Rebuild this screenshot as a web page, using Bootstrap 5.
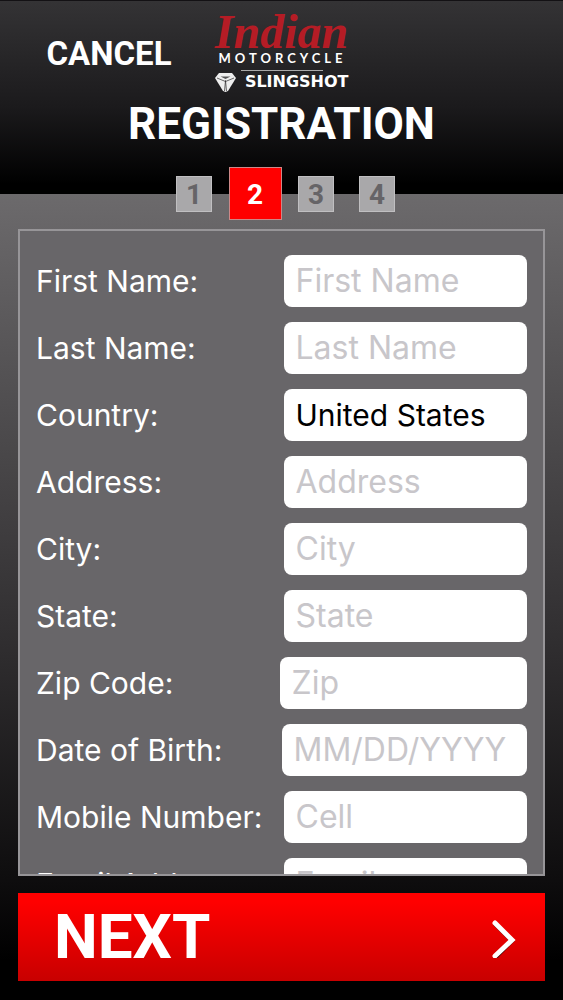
<!DOCTYPE html>
<html lang="en">
<head>
<meta charset="utf-8">
<meta name="viewport" content="width=device-width, initial-scale=1">
<title>Registration</title>
<link href="https://cdn.jsdelivr.net/npm/bootstrap@5.3.0/dist/css/bootstrap.min.css" rel="stylesheet">
<style>
  body {
    font-family: Inter, "Liberation Sans", sans-serif;
    background: linear-gradient(#6c6a6c 194px, #2f2d2f 65%, #0e0d0e 88%, #000 96%);
    color: #fff;
  }
  .display-face { font-family: Roboto, "Liberation Sans", sans-serif; font-weight: 700; line-height: 1; }
  .masthead { height: 194px; background: linear-gradient(#343335, #1b1a1c 55%, #000 95%); border-top: 1px solid #131114; }
  .masthead-row { display: grid; grid-template-columns: 1fr 134px 1fr; padding-top: 11px; }
  .cancel-btn { font-size: 33px; color: #fff; justify-self: end; margin-right: 43px; margin-top: 25px; }
  .brand-script { font: italic 700 48px/40px "Liberation Serif", serif; color: #b51c25; }
  .brand-sub { font: 700 13px/12px Lato, sans-serif; letter-spacing: 4px; padding-left: 4px; }
  .brand-rule { width: 82px; height: 1px; background: #aaa; margin: 6px auto 2px; }
  .brand-wide { font: 700 16px/18px "DejaVu Sans", sans-serif; }
  .page-title { font-size: 44px; margin-top: 10px; }
  .steps { margin-top: -27px; padding-left: 8px; }
  .step-slot { width: 61px; }
  .step { width: 36px; height: 36px; font-size: 28px; background: #a9a8aa; border: 1px solid #c0bfc1; color: #666467; padding-top: 3px; }
  .step.current { width: 53px; height: 53px; background: #f00; border-color: #c88; color: #fff; }
  .form-panel {
    margin: 9px 18px 17px; padding: 24px 16px; background: #686669;
    border: 2px solid #979598; flex: 1 1 0; min-height: 0; overflow-y: auto; scrollbar-width: none;
  }
  .form-panel::-webkit-scrollbar { display: none; }
  .form-rows { gap: 15px; }
  .field-label { font-size: 30px; line-height: 52px; white-space: nowrap; }
  .field-box, .field-box:focus {
    width: calc(50% - 2px); height: 52px; padding: 0 12px; border: 0; border-radius: 8px;
    font-size: 30px; line-height: 52px; color: #000; background: #fff;
  }
  .field-box.wide-1 { width: 50%; }
  .field-box.wide-2 { width: calc(50% + 2px); }
  .field-box::placeholder { color: #c8c6ca; opacity: 1; font-size: 32px; }
  .next-btn {
    margin: 0 18px 19px; height: 88px; padding: 0 28px 0 36px; color: #fff; font-size: 62px;
    background: linear-gradient(#f00 10%, #c80000);
  }
</style>
</head>
<body>
<div class="d-flex flex-column vh-100">
  <header class="masthead flex-shrink-0">
    <div class="masthead-row">
      <button type="button" class="btn p-0 border-0 display-face cancel-btn align-self-start">CANCEL</button>
      <div class="text-nowrap">
        <div class="brand-script text-center">Indian</div>
        <div class="brand-sub">MOTORCYCLE</div>
        <div class="brand-rule"></div>
        <div class="d-flex justify-content-between brand-wide">
          <svg width="21" height="19" viewBox="0 0 21 19" aria-hidden="true">
            <path d="M4 0h13l4 5-8 13-2.500 1-2.500-1L0 5z" fill="#eee"/>
            <path d="M10.500 7.500L9.500 18M10.500 7.500L11.500 18M2 5l8.500 3.500L19 5" fill="none" stroke="#29282a" stroke-width="0.700"/>
            <path d="M5.500 3.500h10l-5 2.500z" fill="#555"/>
          </svg>
          <span>SLINGSHOT</span>
        </div>
      </div>
    </div>
    <h1 class="display-face page-title text-center mb-0">REGISTRATION</h1>
  </header>

  <ol class="steps list-unstyled d-flex justify-content-center align-items-center mb-0 display-face">
    <li class="step-slot d-flex justify-content-center"><span class="step d-flex align-items-center justify-content-center">1</span></li>
    <li class="step-slot d-flex justify-content-center" aria-current="step"><span class="step current d-flex align-items-center justify-content-center">2</span></li>
    <li class="step-slot d-flex justify-content-center"><span class="step d-flex align-items-center justify-content-center">3</span></li>
    <li class="step-slot d-flex justify-content-center"><span class="step d-flex align-items-center justify-content-center">4</span></li>
  </ol>

  <form class="form-panel" id="registration">
    <div class="form-rows d-flex flex-column">
      <div class="d-flex justify-content-between"><label class="field-label" for="first">First Name:</label><input class="form-control field-box" id="first" type="text" placeholder="First Name"></div>
      <div class="d-flex justify-content-between"><label class="field-label" for="last">Last Name:</label><input class="form-control field-box" id="last" type="text" placeholder="Last Name"></div>
      <div class="d-flex justify-content-between"><label class="field-label" for="country">Country:</label><select class="form-control field-box" id="country"><option>United States</option></select></div>
      <div class="d-flex justify-content-between"><label class="field-label" for="address">Address:</label><input class="form-control field-box" id="address" type="text" placeholder="Address"></div>
      <div class="d-flex justify-content-between"><label class="field-label" for="city">City:</label><input class="form-control field-box" id="city" type="text" placeholder="City"></div>
      <div class="d-flex justify-content-between"><label class="field-label" for="state">State:</label><input class="form-control field-box" id="state" type="text" placeholder="State"></div>
      <div class="d-flex justify-content-between"><label class="field-label" for="zip">Zip Code:</label><input class="form-control field-box wide-2" id="zip" type="text" placeholder="Zip"></div>
      <div class="d-flex justify-content-between"><label class="field-label" for="dob">Date of Birth:</label><input class="form-control field-box wide-1" id="dob" type="text" placeholder="MM/DD/YYYY"></div>
      <div class="d-flex justify-content-between"><label class="field-label" for="cell">Mobile Number:</label><input class="form-control field-box" id="cell" type="tel" placeholder="Cell"></div>
      <div class="d-flex justify-content-between"><label class="field-label" for="email">Email Address:</label><input class="form-control field-box" id="email" type="email" placeholder="Email"></div>
    </div>
  </form>

  <button type="submit" form="registration" class="btn rounded-0 border-0 display-face next-btn d-flex align-items-center justify-content-between flex-shrink-0">
    NEXT
    <svg width="26" height="42" viewBox="0 0 26 42" aria-hidden="true" fill="none" stroke-linecap="round" stroke-linejoin="miter">
      <path d="M4 8l17 17L4 42" stroke="#400" stroke-width="4"/>
      <path d="M4 7l17 17L4 40" stroke="#fff" stroke-width="5"/>
    </svg>
  </button>
</div>
<script src="https://cdn.jsdelivr.net/npm/bootstrap@5.3.0/dist/js/bootstrap.bundle.min.js"></script>
</body>
</html>
